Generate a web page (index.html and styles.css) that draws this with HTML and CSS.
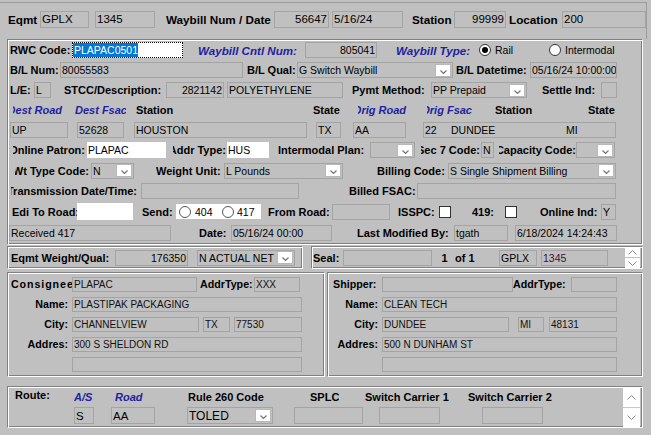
FILE: index.html
```html
<!DOCTYPE html>
<html>
<head>
<meta charset="utf-8">
<title>Waybill</title>
<link rel="stylesheet" href="styles.css">
</head>
<body>
<div class="frame">
  <div class="row h20">
    <span class="lt m8 w32">Eqmt</span>
    <span class="f ft w49">GPLX</span>
    <span class="f ft m6 w60">1345</span>
    <span class="lt m11 w108">Waybill Num / Date</span>
    <span class="f ft r w55">56647</span>
    <span class="f ft m3 w71">5/16/24</span>
    <span class="lt m9 w42">Station</span>
    <span class="f ft r w52">99999</span>
    <span class="lt m3 w53">Location</span>
    <span class="f ft w84">200</span>
  </div>
</div>

<div class="panel main">
  <div class="row h20">
    <span class="l m2 w62">RWC Code:</span>
    <span class="in sel w111"><span class="hl">PLAPAC0501</span></span>
    <span class="lb big m15 w102">Waybill Cntl Num:</span>
    <span class="f r m5 w72">805041</span>
    <span class="lb big m19 w76">Waybill Type:</span>
    <span class="radio on m7"></span>
    <span class="t m4 w18">Rail</span>
    <span class="radio m36"></span>
    <span class="t m4 w50">Intermodal</span>
  </div>
  <div class="row h20">
    <span class="l m2 w50">B/L Num:</span>
    <span class="f w183">80055583</span>
    <span class="l m4 w50">B/L Qual:</span>
    <span class="f cb w156"><span class="cbt">G Switch Waybill</span><span class="btn"><svg width="7" height="4" viewBox="0 0 7 4"><polyline points="0.5,0.5 3.5,3.5 6.5,0.5" fill="none" stroke="#777" stroke-width="1.2"/></svg></span></span>
    <span class="l m3 w74">B/L Datetime:</span>
    <span class="f w87">05/16/24 10:00:00</span>
  </div>
  <div class="row h20">
    <span class="l m2 w24">L/E:</span>
    <span class="f w17">L</span>
    <span class="l m13 w102">STCC/Description:</span>
    <span class="f r w58">2821142</span>
    <span class="f m3 w116">POLYETHYLENE</span>
    <span class="l m9 w79">Pymt Method:</span>
    <span class="f cb w96"><span class="cbt">PP Prepaid</span><span class="btn"><svg width="7" height="4" viewBox="0 0 7 4"><polyline points="0.5,0.5 3.5,3.5 6.5,0.5" fill="none" stroke="#777" stroke-width="1.2"/></svg></span></span>
    <span class="l m15 w59">Settle Ind:</span>
    <span class="f w16"></span>
  </div>
  <div class="row h20">
    <span class="lb clip m5 w50">Dest Road</span>
    <span class="lb m12 w51">Dest Fsac</span>
    <span class="l m10 w39">Station</span>
    <span class="l m138 w30">State</span>
    <span class="lb clip m15 w49">Orig Road</span>
    <span class="lb clip m20 w46">Orig Fsac</span>
    <span class="l m22 w38">Station</span>
    <span class="l m55 w28">State</span>
  </div>
  <div class="row h20">
    <span class="f m2 w58">UP</span>
    <span class="f m9 w47">52628</span>
    <span class="f m10 w173">HOUSTON</span>
    <span class="f m9 w25">TX</span>
    <span class="f m12 w53">AA</span>
    <span class="f m17 w193"><span class="w26">22</span><span class="w115">DUNDEE</span><span>MI</span></span>
  </div>
  <div class="row h20">
    <span class="l clip m5 w72">Online Patron:</span>
    <span class="in m2 w79">PLAPAC</span>
    <span class="l clip m7 w53">Addr Type:</span>
    <span class="in m1 w42">HUS</span>
    <span class="l m9 w91">Intermodal Plan:</span>
    <span class="f cb m1 w45"><span class="cbt"></span><span class="btn"><svg width="7" height="4" viewBox="0 0 7 4"><polyline points="0.5,0.5 3.5,3.5 6.5,0.5" fill="none" stroke="#777" stroke-width="1.2"/></svg></span></span>
    <span class="l clip m6 w59">Sec 7 Code:</span>
    <span class="f m1 w13">N</span>
    <span class="l clip m5 w77">Capacity Code:</span>
    <span class="f cb w39"><span class="cbt"></span><span class="btn"><svg width="7" height="4" viewBox="0 0 7 4"><polyline points="0.5,0.5 3.5,3.5 6.5,0.5" fill="none" stroke="#777" stroke-width="1.2"/></svg></span></span>
  </div>
  <div class="row h21">
    <span class="l clip m7 w74">Wt Type Code:</span>
    <span class="f cb m2 w43"><span class="cbt">N</span><span class="btn"><svg width="7" height="4" viewBox="0 0 7 4"><polyline points="0.5,0.5 3.5,3.5 6.5,0.5" fill="none" stroke="#777" stroke-width="1.2"/></svg></span></span>
    <span class="l m22 w68">Weight Unit:</span>
    <span class="f cb w119"><span class="cbt">L Pounds</span><span class="btn"><svg width="7" height="4" viewBox="0 0 7 4"><polyline points="0.5,0.5 3.5,3.5 6.5,0.5" fill="none" stroke="#777" stroke-width="1.2"/></svg></span></span>
    <span class="l m34 w71">Billing Code:</span>
    <span class="f cb w168"><span class="cbt">S Single Shipment Billing</span><span class="btn"><svg width="7" height="4" viewBox="0 0 7 4"><polyline points="0.5,0.5 3.5,3.5 6.5,0.5" fill="none" stroke="#777" stroke-width="1.2"/></svg></span></span>
  </div>
  <div class="row h20">
    <span class="l clip pr2 m3 w128">Transmission Date/Time:</span>
    <span class="f m2 w158"></span>
    <span class="l m50 w68">Billed FSAC:</span>
    <span class="f w199"></span>
  </div>
  <div class="row h21">
    <span class="l m4 w65">Edi To Road:</span>
    <span class="in tall w56"></span>
    <span class="l m9 w34">Send:</span>
    <span class="radios w85">
      <span class="radio m3"></span><span class="t m4 w18">404</span>
      <span class="radio m9"></span><span class="t m3">417</span>
    </span>
    <span class="l m7 w64">From Road:</span>
    <span class="f w58"></span>
    <span class="l m8 w41">ISSPC:</span>
    <span class="chk"></span>
    <span class="l m21 w33">419:</span>
    <span class="chk"></span>
    <span class="l m23 w61">Online Ind:</span>
    <span class="f w15">Y</span>
  </div>
  <div class="row h21">
    <span class="f m1 w162">Received 417</span>
    <span class="l m28 w32">Date:</span>
    <span class="f w101">05/16/24 00:00</span>
    <span class="l m25 w97">Last Modified By:</span>
    <span class="f w54">tgath</span>
    <span class="f m7 w102">6/18/2024 14:24:43</span>
  </div>
</div>

<div class="pair">
  <div class="panel row wq">
    <span class="l m3 w104">Eqmt Weight/Qual:</span>
    <span class="f r w73">176350</span>
    <span class="f cb m9 w98"><span class="cbt">N ACTUAL NET</span><span class="btn"><svg width="7" height="4" viewBox="0 0 7 4"><polyline points="0.5,0.5 3.5,3.5 6.5,0.5" fill="none" stroke="#777" stroke-width="1.2"/></svg></span></span>
  </div>
  <div class="panel row seal m8">
    <span class="l m1 w30">Seal:</span>
    <span class="f w89"></span>
    <span class="l ctr m8 w9">1</span>
    <span class="l m6 w24">of 1</span>
    <span class="f m20 w38">GPLX</span>
    <span class="f m4 w67 purple">1345</span>
    <span class="spin m17">
      <span class="sp"><svg width="9" height="5" viewBox="0 0 9 5"><polyline points="0.5,4.5 4.5,0.5 8.5,4.5" fill="none" stroke="#888" stroke-width="1"/></svg></span>
      <span class="sp"><svg width="9" height="5" viewBox="0 0 9 5"><polyline points="0.5,0.5 4.5,4.5 8.5,0.5" fill="none" stroke="#888" stroke-width="1"/></svg></span>
    </span>
  </div>
</div>

<div class="pair2">
  <div class="panel addr cons">
    <div class="row h20">
      <span class="l8 wide m3 w61">Consignee</span>
      <span class="f f2 w125">PLAPAC</span>
      <span class="l8 m3 w54">AddrType:</span>
      <span class="f f2 w46">XXX</span>
    </div>
    <div class="row h20">
      <span class="l8 rl w62">Name:</span>
      <span class="f f2 m2 w230">PLASTIPAK PACKAGING</span>
    </div>
    <div class="row h20">
      <span class="l8 rl w62">City:</span>
      <span class="f f2 m2 w127">CHANNELVIEW</span>
      <span class="f f2 m4 w27">TX</span>
      <span class="f f2 m4 w68">77530</span>
    </div>
    <div class="row h20">
      <span class="l8 rl w62">Addres:</span>
      <span class="f f2 m2 w230">300 S SHELDON RD</span>
    </div>
    <div class="row h20">
      <span class="f f2 m64 w230"></span>
    </div>
  </div>
  <div class="panel addr ship m2">
    <div class="row h20">
      <span class="l8 m5 w48">Shipper:</span>
      <span class="f f2 m1 w131"></span>
      <span class="l8 w58">AddrType:</span>
      <span class="f f2 w46"></span>
    </div>
    <div class="row h20">
      <span class="l8 rl w52">Name:</span>
      <span class="f f2 m2 w235">CLEAN TECH</span>
    </div>
    <div class="row h20">
      <span class="l8 rl w52">City:</span>
      <span class="f f2 m2 w127">DUNDEE</span>
      <span class="f f2 m9 w26">MI</span>
      <span class="f f2 m5 w68">48131</span>
    </div>
    <div class="row h20">
      <span class="l8 rl w52">Addres:</span>
      <span class="f f2 m2 w235">500 N DUNHAM ST</span>
    </div>
    <div class="row h20">
      <span class="f f2 m54 w235"></span>
    </div>
  </div>
</div>

<div class="panel route">
  <div class="w615">
    <div class="row h19">
      <span class="l m7 w35 up">Route:</span>
      <span class="lb m24 w21">A/S</span>
      <span class="lb m20 w29">Road</span>
      <span class="l m44 w78">Rule 260 Code</span>
      <span class="l m44 w29">SPLC</span>
      <span class="l m26 w87">Switch Carrier 1</span>
      <span class="l m16 w88">Switch Carrier 2</span>
    </div>
    <div class="row h19">
      <span class="f fb m66 w20">S</span>
      <span class="f fb m17 w44">AA</span>
      <span class="f fb cb m32 w86"><span class="cbt">TOLED</span><span class="btn"><svg width="7" height="4" viewBox="0 0 7 4"><polyline points="0.5,0.5 3.5,3.5 6.5,0.5" fill="none" stroke="#777" stroke-width="1.2"/></svg></span></span>
      <span class="f fb m21 w69"></span>
      <span class="f fb m16 w61"></span>
      <span class="f fb m42 w61"></span>
    </div>
  </div>
  <div class="vspin">
    <span class="vs"><svg width="9" height="5" viewBox="0 0 9 5"><polyline points="0.5,4.5 4.5,0.5 8.5,4.5" fill="none" stroke="#888" stroke-width="1"/></svg></span>
    <span class="vs"><svg width="9" height="5" viewBox="0 0 9 5"><polyline points="0.5,0.5 4.5,4.5 8.5,0.5" fill="none" stroke="#888" stroke-width="1"/></svg></span>
  </div>
</div>
</body>
</html>
```

FILE: styles.css
```css
* { box-sizing: border-box; }

body {
  margin: 0;
  width: 651px;
  height: 435px;
  overflow: hidden;
  background: #c0c0c0;
  color: #000;
  font-family: "Liberation Sans", Arial, sans-serif;
}

.frame {
  margin-top: 2px;
  width: 647px;
  height: 37px;
  padding-top: 6px;
  border-top: 1px solid #9c9c9c;
  border-right: 1px solid #9c9c9c;
}

.row { display: flex; align-items: center; }
.h18 { height: 18px; }
.h19 { height: 19px; }
.h20 { height: 20px; }
.h21 { height: 21px; }

/* etched group boxes */
.panel {
  border-style: solid;
  border-width: 1px;
  border-color: #808080 #fff #fff #808080;
  box-shadow: inset 1px 1px 0 #fff, inset -1px -1px 0 #808080;
}
.main { margin-left: 7px; width: 636px; height: 206px; }

.pair { display: flex; margin-top: 1px; margin-left: 7px; }
.wq { width: 296px; height: 23px; }
.seal { width: 332px; height: 23px; }

.pair2 { display: flex; margin-top: 3px; margin-left: 7px; }
.addr { height: 105px; padding-top: 1px; }
.cons { width: 318px; }
.ship { width: 316px; }

.route {
  display: flex;
  margin-top: 9px;
  margin-left: 7px;
  width: 636px;
  height: 42px;
}

/* labels */
.l, .lt, .lb, .l8, .t {
  flex: none;
  white-space: nowrap;
  overflow: hidden;
}
.l { font-size: 11px; font-weight: bold; }
.lt { font-size: 11.7px; font-weight: bold; }
.lb { font-size: 11px; font-weight: bold; font-style: italic; color: #1f22a0; padding-right: 1px; }
.lb.big { font-size: 11.6px; }
.l8 { font-size: 10.7px; font-weight: bold; }
.t { font-size: 10.5px; }
.clip { display: flex; justify-content: flex-end; }
.rl { display: flex; justify-content: flex-end; padding-right: 2px; }
.pr2 { padding-right: 2px; }
.ctr { text-align: center; }
.wide { letter-spacing: 0.9px; }
.up { margin-top: -3px; }

/* fields */
.f {
  flex: none;
  display: flex;
  align-items: center;
  height: 16px;
  padding: 0 1px;
  border: 1px solid #a4a4a4;
  font-size: 10.5px;
  white-space: nowrap;
  overflow: hidden;
}
.ft { height: 17px; font-size: 11.5px; }
.f2 { height: 15px; font-size: 10px; color: #111; }
.fb { height: 17px; font-size: 11.5px; }
.fb.cb .cbt { font-size: 12px; }
.r { justify-content: flex-end; }
.purple { color: #3a1040; }

.in {
  flex: none;
  display: flex;
  align-items: center;
  height: 16px;
  padding: 0 1px;
  background: #fff;
  font-size: 10.5px;
  white-space: nowrap;
}
.in.tall { height: 17px; }
.sel { border: 1px dotted #000; padding: 0; }
.hl { background: #0078d7; color: #fff; line-height: 14px; padding-left: 1px; }

/* combo */
.cb { padding-right: 1px; }
.cbt { flex: 1; overflow: hidden; }
.btn {
  flex: none;
  width: 16px;
  height: 13px;
  background: #fff;
  border: 1px solid #b8b8b8;
  display: flex;
  justify-content: center;
  align-items: flex-end;
  padding-bottom: 2px;
}
.btn svg { display: block; }

/* radios / checks */
.radio {
  flex: none;
  width: 12px;
  height: 12px;
  border-radius: 50%;
  border: 1px solid #333;
  background: #fff;
  display: flex;
  align-items: center;
  justify-content: center;
}
.radio.on::after {
  content: "";
  width: 6px;
  height: 6px;
  border-radius: 50%;
  background: #000;
}
.radios {
  flex: none;
  display: flex;
  align-items: center;
  height: 15px;
  background: #fff;
}
.radios .radio { border-color: #555; }
.chk {
  flex: none;
  width: 12px;
  height: 12px;
  background: #fff;
  border: 1px solid #333;
}

/* spinners */
.spin {
  flex: none;
  display: flex;
  flex-direction: column;
  gap: 1px;
  width: 15px;
}
.sp {
  height: 10px;
  background: #fff;
  display: flex;
  align-items: center;
  justify-content: center;
}
.sp svg, .vs svg { display: block; }
.vspin {
  flex: none;
  width: 17px;
  height: 39px;
  margin-top: 1px;
  background: #fff;
  display: flex;
  flex-direction: column;
}
.vs {
  flex: 1;
  display: flex;
  align-items: center;
  justify-content: center;
}
.vs + .vs { border-top: 1px solid #c8c8c8; }

/* spacing utilities */
.m1 { margin-left: 1px; } .m2 { margin-left: 2px; } .m3 { margin-left: 3px; }
.m4 { margin-left: 4px; } .m5 { margin-left: 5px; } .m6 { margin-left: 6px; }
.m7 { margin-left: 7px; } .m8 { margin-left: 8px; } .m9 { margin-left: 9px; }
.m10 { margin-left: 10px; } .m11 { margin-left: 11px; } .m12 { margin-left: 12px; }
.m13 { margin-left: 13px; } .m14 { margin-left: 14px; } .m15 { margin-left: 15px; }
.m16 { margin-left: 16px; } .m17 { margin-left: 17px; } .m19 { margin-left: 19px; }
.m20 { margin-left: 20px; } .m21 { margin-left: 21px; } .m22 { margin-left: 22px; }
.m23 { margin-left: 23px; } .m24 { margin-left: 24px; } .m25 { margin-left: 25px; }
.m26 { margin-left: 26px; } .m28 { margin-left: 28px; } .m32 { margin-left: 32px; }
.m34 { margin-left: 34px; } .m36 { margin-left: 36px; } .m42 { margin-left: 42px; }
.m44 { margin-left: 44px; } .m50 { margin-left: 50px; } .m54 { margin-left: 54px; }
.m55 { margin-left: 55px; } .m64 { margin-left: 64px; } .m66 { margin-left: 66px; }
.m138 { margin-left: 138px; }

/* width utilities */
.w9 { width: 9px; } .w13 { width: 13px; } .w15 { width: 15px; } .w16 { width: 16px; }
.w17 { width: 17px; } .w18 { width: 18px; } .w20 { width: 20px; } .w21 { width: 21px; }
.w24 { width: 24px; } .w25 { width: 25px; } .w26 { width: 26px; flex: none; } .w27 { width: 27px; }
.w28 { width: 28px; } .w29 { width: 29px; } .w30 { width: 30px; } .w32 { width: 32px; }
.w33 { width: 33px; } .w34 { width: 34px; } .w35 { width: 35px; } .w38 { width: 38px; }
.w39 { width: 39px; } .w41 { width: 41px; } .w42 { width: 42px; } .w43 { width: 43px; }
.w44 { width: 44px; } .w45 { width: 45px; } .w46 { width: 46px; } .w47 { width: 47px; }
.w48 { width: 48px; } .w49 { width: 49px; } .w50 { width: 50px; } .w51 { width: 51px; }
.w52 { width: 52px; } .w53 { width: 53px; } .w54 { width: 54px; } .w55 { width: 55px; }
.w56 { width: 56px; } .w58 { width: 58px; } .w59 { width: 59px; } .w60 { width: 60px; }
.w61 { width: 61px; } .w62 { width: 62px; } .w64 { width: 64px; } .w65 { width: 65px; }
.w67 { width: 67px; } .w68 { width: 68px; } .w69 { width: 69px; } .w71 { width: 71px; }
.w72 { width: 72px; } .w73 { width: 73px; } .w74 { width: 74px; } .w76 { width: 76px; }
.w77 { width: 77px; } .w78 { width: 78px; } .w79 { width: 79px; } .w84 { width: 84px; }
.w85 { width: 85px; } .w86 { width: 86px; } .w87 { width: 87px; } .w88 { width: 88px; }
.w89 { width: 89px; } .w91 { width: 91px; } .w96 { width: 96px; } .w97 { width: 97px; }
.w98 { width: 98px; } .w101 { width: 101px; } .w102 { width: 102px; } .w104 { width: 104px; }
.w108 { width: 108px; } .w111 { width: 111px; } .w115 { width: 115px; flex: none; } .w116 { width: 116px; }
.w119 { width: 119px; } .w125 { width: 125px; } .w127 { width: 127px; } .w128 { width: 128px; }
.w130 { width: 130px; } .w131 { width: 131px; } .w156 { width: 156px; } .w158 { width: 158px; }
.w162 { width: 162px; } .w168 { width: 168px; } .w173 { width: 173px; } .w183 { width: 183px; }
.w193 { width: 193px; } .w199 { width: 199px; } .w230 { width: 230px; } .w235 { width: 235px; }
.w615 { width: 615px; flex: none; }
```
